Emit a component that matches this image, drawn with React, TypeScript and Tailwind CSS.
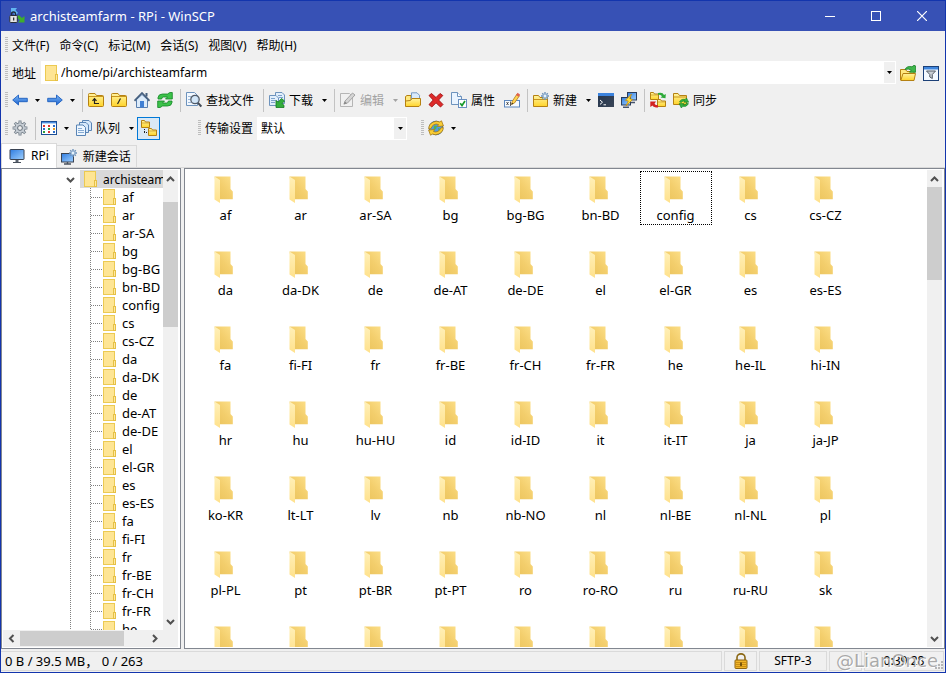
import React from 'react';

type Kids = { children?: React.ReactNode };

/* ---------- icons ---------- */

function Ico({ children }: Kids) {
  return (
    <svg width="16" height="16" viewBox="0 0 16 16" className="shrink-0" aria-hidden="true">
      {children}
    </svg>
  );
}

const smallFolder = 'M0.5 3.5 V13.5 Q0.5 14.5 1.5 14.5 H14.5 Q15.5 14.5 15.5 13.5 V4.5 Q15.5 3.5 14.5 3.5 H8.5 L7 1.5 H1.5 Q0.5 1.5 0.5 2.5 Z';

function Defs() {
  return (
    <svg width="0" height="0" className="absolute" aria-hidden="true">
      <defs>
        <linearGradient id="back" x1="0" y1="1" x2="1" y2="0">
          <stop offset="0" stopColor="#eac35c" />
          <stop offset="0.5" stopColor="#f3ce6c" />
          <stop offset="1" stopColor="#fde08a" />
        </linearGradient>
        <linearGradient id="flap" x1="0" y1="0" x2="0" y2="1">
          <stop offset="0" stopColor="#fff0b8" />
          <stop offset="1" stopColor="#ffe18c" />
        </linearGradient>
        <linearGradient id="gold" x1="0" y1="0" x2="0" y2="1">
          <stop offset="0" stopColor="#fff3a0" />
          <stop offset="1" stopColor="#ffd42a" />
        </linearGradient>
        <linearGradient id="blue" x1="0" y1="0" x2="0" y2="1">
          <stop offset="0" stopColor="#7db8f5" />
          <stop offset="1" stopColor="#1c62cf" />
        </linearGradient>
        <linearGradient id="screen" x1="0" y1="0" x2="1" y2="1">
          <stop offset="0" stopColor="#2f7ce0" />
          <stop offset="1" stopColor="#9fd0ff" />
        </linearGradient>
        <linearGradient id="term" x1="0" y1="0" x2="1" y2="1">
          <stop offset="0" stopColor="#23344d" />
          <stop offset="1" stopColor="#3a4658" />
        </linearGradient>
      </defs>
    </svg>
  );
}

const AppIcon = () => (
  <Ico>
    <path d="M2 0 H8 L6.5 2 L9 5 L6 7.5 L4 4.5 L2 6 Z" fill="#62b5f2" />
    <path d="M15.5 14.5 H9 L10.8 12.6 L7.8 9 L9.8 7 L13 10 L15.5 8 Z" fill="#3fae2a" />
    <path d="M2.5 8 V6 a2 2 0 0 1 4 0 V8" fill="none" stroke="#222b3b" strokeWidth="1.4" />
    <rect x="0.8" y="7.5" width="7.5" height="7" rx="0.8" fill="#e3e3e3" stroke="#2a2f3a" />
    <rect x="4" y="9.5" width="1.3" height="3" fill="#333" />
  </Ico>
);
const ArrowL = () => (
  <Ico>
    <path d="M0.7 8 L6.5 3 V6.3 H15.3 V9.7 H6.5 V13 Z" fill="url(#blue)" stroke="#1d5fc0" strokeWidth="0.9" />
  </Ico>
);
const ArrowR = () => (
  <Ico>
    <path d="M15.3 8 L9.5 3 V6.3 H0.7 V9.7 H9.5 V13 Z" fill="url(#blue)" stroke="#1d5fc0" strokeWidth="0.9" />
  </Ico>
);
const FolderUp = () => (
  <Ico>
    <path d={smallFolder} fill="url(#gold)" stroke="#b58112" />
    <path d="M1 4.5 H15" stroke="#c8951e" />
    <path d="M6.5 7 V11.5 H11 M4.5 8.8 L6.5 6.6 L8.5 8.8" fill="none" stroke="#222" strokeWidth="1.2" />
  </Ico>
);
const FolderRoot = () => (
  <Ico>
    <path d={smallFolder} fill="url(#gold)" stroke="#b58112" />
    <path d="M1 4.5 H15" stroke="#c8951e" />
    <path d="M6.5 12 L9.5 6.5" stroke="#222" strokeWidth="1.2" />
  </Ico>
);
const Home = () => (
  <Ico>
    <path d="M2.5 7.5 L8 2.5 L13.5 7.5 V15.5 H2.5 Z" fill="#dcebfa" stroke="#5a7fae" />
    <path d="M0.5 8.8 L8 1 L15.5 8.8" fill="none" stroke="#47607f" strokeWidth="1.7" />
    <rect x="11.5" y="1" width="2" height="3.5" fill="#47607f" />
    <rect x="6" y="9" width="4" height="6.5" fill="#3f7fd4" />
  </Ico>
);
const Refresh = () => (
  <Ico>
    <path d="M1 7 V5.5 Q1.5 2 5.5 2 H10.5 L12.8 0.5 H15.3 V7 H8.5 L10.5 5 H6.5 Q5 5 4.6 7 Z" fill="#3cc24a" stroke="#118524" strokeWidth="0.8" />
    <path d="M15 9 V10.5 Q14.5 14 10.5 14 H5.5 L3.2 15.5 H0.7 V9 H7.5 L5.5 11 H9.5 Q11 11 11.4 9 Z" fill="#3cc24a" stroke="#118524" strokeWidth="0.8" />
  </Ico>
);
const Find = () => (
  <Ico>
    <path d="M0.5 0.5 H8.5 L11.5 3.5 V13.5 H0.5 Z" fill="#f2f8ff" stroke="#6d93bd" />
    <path d="M2 4.5 H5 M2 7.5 H4 M2 10.5 H5" stroke="#9bb8d8" />
    <circle cx="9" cy="7.5" r="4.2" fill="#cfe4f8" fillOpacity="0.9" stroke="#515b68" strokeWidth="1.3" />
    <path d="M12 10.8 L15.3 14.5" stroke="#434b57" strokeWidth="2" />
  </Ico>
);
const Download = () => (
  <Ico>
    <path d="M6.5 0.5 H13 L15.5 3 V11.5 H6.5 Z" fill="#e2effc" stroke="#6d93bd" />
    <path d="M0.5 3.5 H7 L9.5 6 V13.5 H0.5 Z" fill="#e2effc" stroke="#6d93bd" />
    <path d="M2 6.5 H6 M2 8.5 H7 M2 10.5 H6 M9 3.5 H13 M10 5.5 H14" stroke="#7ea3cc" />
    <path d="M15.5 9 L13 11.5 L15 13.3 L15 15.5 H7 V8.5 L9.3 10 L12.5 6.5 Z" fill="#32ad3c" stroke="#147a20" strokeWidth="0.8" />
  </Ico>
);
const Edit = () => (
  <Ico>
    <path d="M0.5 1.5 H9.5 L12.5 4.5 V14.5 H0.5 Z" fill="#f0f0f0" stroke="#b5b5b5" />
    <path d="M4 12 L5 9 L12.5 1 L15 3 L7.5 11 Z" fill="#d4d4d4" stroke="#a3a3a3" />
    <path d="M3.5 12.5 L5 9.5 L7 11.2 Z" fill="#888" />
  </Ico>
);
const OpenFolder = () => (
  <Ico>
    <path d="M0.5 13 V4.5 L2 3.5 H6 V8" fill="#ffe980" stroke="#b58112" />
    <path d="M6.5 0.8 H12 L14.5 3.3 V9 H6.5 Z" fill="#d9eafb" stroke="#6d93bd" strokeWidth="0.9" />
    <path d="M0.5 14.5 V9 L5.5 8.5 L7 6.5 H15.5 V13 L14 14.5 Z" fill="url(#gold)" stroke="#b58112" />
  </Ico>
);
const Delete = () => (
  <Ico>
    <path d="M1 3.5 L3.5 1.5 L8 5.5 L12 1.5 L14.8 3.5 L10.6 8 L15 12.5 L12.5 15 L8 10.8 L3.8 15 L1 12.6 L5.2 8 Z" fill="#de2a2a" stroke="#a01010" strokeWidth="0.9" />
  </Ico>
);
const Props = () => (
  <Ico>
    <path d="M0.5 0.5 H6.5 L10.5 4.5 V12.5 H0.5 Z" fill="#eaf4ff" stroke="#6d93bd" />
    <path d="M6.5 0.5 V4.5 H10.5" fill="#fff" stroke="#6d93bd" />
    <rect x="7.5" y="7.5" width="8" height="8" fill="#fff" stroke="#6a8fc0" />
    <path d="M9.2 11.2 L11 13.5 L14 9" fill="none" stroke="#189a2a" strokeWidth="1.7" />
  </Ico>
);
const Rename = () => (
  <Ico>
    <rect x="0.5" y="8.5" width="15" height="6.5" fill="#f7fbff" stroke="#5b86bd" />
    <path d="M2.5 10 L4.5 13 M4.5 10 L2.5 13 M6.5 9.5 V14" stroke="#333" strokeWidth="0.8" />
    <path d="M7.5 12.5 L8.3 9.2 L13 2 L15.5 3.7 L10.5 11 Z" fill="#ffd451" stroke="#b07a1b" strokeWidth="0.8" />
    <path d="M12 3.2 L13.5 0.7 L16 2.5 L14.8 4.7 Z" fill="#e2614e" />
    <path d="M7.4 12.7 L8 10.8 L9.2 11.7 Z" fill="#222" />
  </Ico>
);
const Spark = ({ x, y }: { x: number; y: number }) => (
  <g transform={`translate(${x} ${y})`}>
    <path d="M0 -4 V4 M-4 0 H4 M-2.8 -2.8 L2.8 2.8 M2.8 -2.8 L-2.8 2.8" stroke="#6e93bb" strokeWidth="1.4" />
    <circle r="1.9" fill="#e4f1fc" stroke="#86a8cc" strokeWidth="0.8" />
  </g>
);
const NewFolder = () => (
  <Ico>
    <path d="M0.5 3.5 V14.5 H14.5 V5.5 H7 L5.5 3.5 Z" fill="url(#gold)" stroke="#b58112" />
    <path d="M1 7.5 H14" stroke="#c8951e" />
    <Spark x={12} y={4} />
  </Ico>
);
const Terminal = () => (
  <Ico>
    <rect x="0" y="1" width="16" height="14" fill="url(#term)" />
    <rect x="0" y="1" width="16" height="3" fill="#3b82dd" />
    <path d="M2 8 L4.5 10.2 L2 12.4 M5.5 12.8 H8" fill="none" stroke="#fff" />
  </Ico>
);
const Putty = () => (
  <Ico>
    <rect x="6.5" y="0.5" width="9" height="7.5" fill="url(#screen)" stroke="#2b3d5a" />
    <rect x="0.5" y="5.5" width="9" height="7.5" fill="url(#screen)" stroke="#2b3d5a" />
    <path d="M2 15.2 H8 M10 10.5 H14" stroke="#46536a" strokeWidth="1.4" />
    <path d="M10.5 2 L4.5 8.3 L7.3 9 L5 14 L11.5 7.5 L8.8 6.8 Z" fill="#ffe23c" stroke="#c58b0d" strokeWidth="0.8" />
  </Ico>
);
const MiniFolder = ({ x, y }: { x: number; y: number }) => (
  <g transform={`translate(${x} ${y})`}>
    <path d="M0.5 0.5 H3.5 L4.5 2 H8.5 V7.5 H0.5 Z" fill="url(#gold)" stroke="#b58112" />
    <path d="M1 3 H8" stroke="#c8951e" strokeWidth="0.7" />
  </g>
);
const Compare = () => (
  <Ico>
    <MiniFolder x={0} y={0} />
    <MiniFolder x={7} y={7} />
    <path d="M8 1 Q13 0 14 3 L15.8 2 L15.5 6.3 L10.5 5.5 L12 4.2 Q11 2.3 8 2.8 Z" fill="#2faa3a" />
    <path d="M8 15.5 Q3.5 15.5 2.5 13.5 L0.3 15 V9.5 H6 L4.5 11.7 Q5.5 13.3 8 13.3 Z" fill="#d22222" />
  </Ico>
);
const Sync = () => (
  <Ico>
    <path d="M0.5 1.5 H5 L6.5 3.5 H13.5 V12.5 H0.5 Z" fill="url(#gold)" stroke="#b58112" />
    <path d="M1 5 H13" stroke="#c8951e" />
    <path d="M6.5 10 Q8 6.5 12 7.5 L13.5 6 L15.7 10.2 H11 L12 9 Q9.5 8.5 8.3 10.5 Z" fill="#34b042" stroke="#13801f" strokeWidth="0.6" />
    <path d="M15.5 11.7 Q13.5 15.5 9.8 14.3 L8.3 16 L6.2 11.6 H11 L10 12.8 Q12 13.3 13.7 11.3 Z" fill="#34b042" stroke="#13801f" strokeWidth="0.6" />
  </Ico>
);
const Gear = () => (
  <Ico>
    <g stroke="#7b858f" strokeWidth="3">
      <path d="M8 0.6 V15.4 M0.6 8 H15.4 M2.8 2.8 L13.2 13.2 M13.2 2.8 L2.8 13.2" />
    </g>
    <circle cx="8" cy="8" r="5.2" fill="#c5ccd3" stroke="#7b858f" />
    <g stroke="#c5ccd3" strokeWidth="1.3">
      <path d="M8 1.3 V14.7 M1.3 8 H14.7 M3.3 3.3 L12.7 12.7 M12.7 3.3 L3.3 12.7" />
    </g>
    <circle cx="8" cy="8" r="2.4" fill="#f0f0f0" stroke="#66707a" />
  </Ico>
);
const ListView = () => (
  <Ico>
    <rect x="0.5" y="1.5" width="15" height="13" fill="#fff" stroke="#1c4f96" />
    <rect x="1" y="2" width="14" height="1.4" fill="#4d90e0" />
    <path d="M2 6 H4 M7 6 H9 M7 12 H9" stroke="#dd3333" strokeWidth="2" />
    <path d="M12 6 H14 M2 9 H4 M12 12 H14" stroke="#2a6cc8" strokeWidth="2" />
    <path d="M7 9 H9 M2 12 H4" stroke="#2f9e3a" strokeWidth="2" />
    <path d="M12 9 H14" stroke="#e8a020" strokeWidth="2" />
  </Ico>
);
const Queue = () => (
  <Ico>
    <path d="M6.5 0.5 H13 L15.5 3 V10.5 H6.5 Z" fill="#d6e8fa" stroke="#5984b5" />
    <path d="M3.5 2.5 H10 L12.5 5 V12.5 H3.5 Z" fill="#d6e8fa" stroke="#5984b5" />
    <path d="M0.5 5 H7 L9.5 7.5 V15.5 H0.5 Z" fill="#edf6ff" stroke="#5984b5" />
    <path d="M2 8.5 H6 M2 10.5 H8 M2 12.5 H8" stroke="#86abd3" />
  </Ico>
);
const TreeToggle = () => (
  <Ico>
    <MiniFolder x={0} y={0} />
    <MiniFolder x={7} y={8} />
    <path d="M3.5 9 V12.5 M3 12.5 H7" stroke="#222" strokeDasharray="1 1" />
  </Ico>
);
const Monitor = () => (
  <Ico>
    <rect x="1" y="1.5" width="14" height="10" rx="0.5" fill="url(#screen)" stroke="#3a4352" />
    <path d="M6.5 12 H9.5 V14 H6.5 Z" fill="#58616e" />
    <path d="M4 14.5 H12" stroke="#48505c" />
  </Ico>
);
const NewSession = () => (
  <Ico>
    <rect x="0.5" y="4.5" width="12" height="8.5" fill="url(#screen)" stroke="#3a4352" />
    <path d="M3 15 H10 M6.5 13 V15" stroke="#48505c" strokeWidth="1.4" />
    <Spark x={12} y={4} />
  </Ico>
);
const Globe = () => (
  <Ico>
    <circle cx="8" cy="8" r="6.8" fill="#4e9be6" stroke="#2a69b0" />
    <path d="M6 5.5 L9 6 L8 9 L5.5 10 Z M10 8 L12.5 9 L10.5 11 Z" fill="#58b24b" />
    <path d="M0.8 9 Q0.5 4 5.5 2 Q9 0.5 11.5 2 L13.5 0.8 L15.5 6 L9.5 6.5 L10.5 4.5 Q8 3.3 5.8 4.8 Q3.5 6.3 3 8.6 Z" fill="#f9cd35" stroke="#a77a14" strokeWidth="0.8" />
    <path d="M15.2 7.5 Q15.5 12 10.5 14 Q7 15.5 4.6 14 L2.5 15.2 L0.6 10 L6.5 9.5 L5.5 11.5 Q8 12.7 10.2 11.2 Q12.5 9.7 13 7.8 Z" fill="#f9cd35" stroke="#a77a14" strokeWidth="0.8" />
  </Ico>
);
const OpenDir = () => (
  <Ico>
    <path d="M0.5 15 V4.5 H5.5 L7 6.5 H14 V9" fill="#ffe980" stroke="#b58112" />
    <path d="M0.8 15.5 L3 8.5 H15.5 L14 15.5 Z" fill="url(#gold)" stroke="#b58112" />
    <path d="M5 4.5 Q7 0.5 12 1.8 L14 0.3 L15.7 1 V7.2 H9.5 L11.3 5 Q8.5 3.4 5 4.5 Z" fill="#3eb64b" stroke="#177f25" strokeWidth="0.8" />
  </Ico>
);
const Filter = () => (
  <Ico>
    <rect x="0.5" y="1.5" width="15" height="14" fill="#f4f9ff" stroke="#1c4077" />
    <rect x="1" y="2" width="14" height="2.5" fill="#3f86dd" />
    <path d="M3.5 6 H12.5 L9.3 9.5 V13.5 L6.8 12 V9.5 Z" fill="#c9ced4" stroke="#565d66" />
  </Ico>
);
const Lock = () => (
  <Ico>
    <path d="M4 8 V4.5 a4 3.6 0 0 1 8 0 V8" fill="none" stroke="#8a6714" strokeWidth="1.6" />
    <rect x="2" y="7" width="12" height="8.5" rx="0.8" fill="#f0b52a" stroke="#8f6510" />
    <path d="M3 9.5 H13 M3 11.5 H13 M3 13.5 H13" stroke="#c98d14" />
    <path d="M8 9.5 V13" stroke="#5e4208" strokeWidth="1.6" />
  </Ico>
);

function FolderSmall() {
  return (
    <svg width="14" height="16" viewBox="0 0 14 16" className="shrink-0" aria-hidden="true">
      <rect x="0.5" y="0.5" width="11" height="15" fill="#fee594" stroke="#ecca52" />
      <rect x="10.5" y="9.5" width="2" height="6" fill="#ffe9a0" stroke="#e6c045" />
    </svg>
  );
}

function FolderLarge() {
  return (
    <svg width="20" height="28" viewBox="0 0 20 28" className="shrink-0" aria-hidden="true">
      <path d="M0.5 0.5 H16.5 V13 L18.8 15.5 V23.3 H4 Z" fill="url(#back)" />
      <path d="M0.5 0.5 L6 4 V27 L0.5 23.5 Z" fill="url(#flap)" />
    </svg>
  );
}

function Chevron({ dir }: { dir: 'up' | 'down' | 'left' | 'right' }) {
  const d = {
    up: 'M1 7 L4.5 3.5 L8 7',
    down: 'M1 3 L4.5 6.5 L8 3',
    left: 'M6.5 1 L3 4.5 L6.5 8',
    right: 'M3 1 L6.5 4.5 L3 8',
  }[dir];
  return (
    <svg width="9" height="9" viewBox="0 0 9 9" aria-hidden="true">
      <path d={d} fill="none" stroke="#505050" strokeWidth="2" />
    </svg>
  );
}

const Tri = () => (
  <svg width="5" height="3" viewBox="0 0 5 3" aria-hidden="true">
    <path d="M0 0 H5 L2.5 3 Z" fill="currentColor" />
  </svg>
);

/* ---------- toolbar parts ---------- */

const Grip = () => (
  <span className="h-4 w-[3px] shrink-0 bg-[repeating-linear-gradient(to_bottom,#bdbdbd_0_1px,transparent_1px_2px)]" />
);
const Sep = () => <span className="ml-1 mr-px h-[23px] w-px shrink-0 bg-[#c3c3c3]" />;

function Tool({ icon, label, text, disabled }: { icon: React.ReactNode; label: string; text?: boolean; disabled?: boolean }) {
  return (
    <button
      type="button"
      aria-label={label}
      disabled={disabled}
      className={`flex h-[23px] shrink-0 items-center gap-1 pl-1 disabled:text-[#a3a3a3] ${text ? 'pr-[5px]' : 'pr-[3px]'}`}
    >
      {icon}
      {text && <span className="pt-[2px]">{label}</span>}
    </button>
  );
}

function Caret({ label, disabled }: { label: string; disabled?: boolean }) {
  return (
    <button type="button" aria-label={label} disabled={disabled} className="flex h-[23px] w-3 shrink-0 items-center justify-center disabled:text-[#a3a3a3]">
      <Tri />
    </button>
  );
}

/* ---------- data ---------- */

const menus = ['文件(F)', '命令(C)', '标记(M)', '会话(S)', '视图(V)', '帮助(H)'];

const folders =
  'af ar ar-SA bg bg-BG bn-BD config cs cs-CZ da da-DK de de-AT de-DE el el-GR es es-ES fa fi-FI fr fr-BE fr-CH fr-FR he he-IL hi-IN hr hu hu-HU id id-ID it it-IT ja ja-JP ko-KR lt-LT lv nb nb-NO nl nl-BE nl-NL pl pl-PL pt pt-BR pt-PT ro ro-RO ru ru-RU sk'.split(
    ' ',
  );
const treeFolders = folders.slice(0, 25);
const partialRow = Array.from({ length: 9 }, (_, i) => i);

/* ---------- sections ---------- */

function TitleBar() {
  return (
    <header className="flex h-[30px] shrink-0 items-center bg-[#3751b5] pl-2 text-white">
      <AppIcon />
      <h1 className="ml-[5px] flex-1 text-[13px] leading-4">archisteamfarm - RPi - WinSCP</h1>
      <button type="button" aria-label="最小化" className="flex h-full w-[46px] items-center justify-center">
        <svg width="10" height="10"><path d="M0 5.5 H10" stroke="#fff" /></svg>
      </button>
      <button type="button" aria-label="最大化" className="flex h-full w-[46px] items-center justify-center">
        <svg width="10" height="10"><rect x="0.5" y="0.5" width="9" height="9" fill="none" stroke="#fff" /></svg>
      </button>
      <button type="button" aria-label="关闭" className="flex h-full w-[46px] items-center justify-center">
        <svg width="10" height="10"><path d="M0 0 L10 10 M10 0 L0 10" stroke="#fff" strokeWidth="1.2" /></svg>
      </button>
    </header>
  );
}

function AddressBar() {
  return (
    <div className="flex h-[27px] shrink-0 items-center pl-1">
      <Grip />
      <label htmlFor="address" className="ml-1 mr-[5px] pt-[2px]">地址</label>
      <div className="flex h-[23px] min-w-0 flex-1 items-center bg-white pl-1">
        <FolderSmall />
        <input id="address" defaultValue="/home/pi/archisteamfarm" className="ml-[2px] h-full min-w-0 flex-1 bg-transparent outline-none" />
        <button type="button" aria-label="地址列表" className="mr-px flex h-[21px] w-[11px] items-center justify-center bg-[#f0f0f0]">
          <Tri />
        </button>
      </div>
      <div className="flex pr-[3px]">
        <Tool icon={<OpenDir />} label="打开目录" />
        <Tool icon={<Filter />} label="过滤" />
      </div>
    </div>
  );
}

function Toolbars() {
  return (
    <>
      <div className="flex h-7 shrink-0 items-center pl-1">
        <Grip />
        <Tool icon={<ArrowL />} label="后退" />
        <Caret label="后退历史" />
        <Tool icon={<ArrowR />} label="前进" />
        <Caret label="前进历史" />
        <Sep />
        <Tool icon={<FolderUp />} label="上级目录" />
        <Tool icon={<FolderRoot />} label="根目录" />
        <Tool icon={<Home />} label="主目录" />
        <Tool icon={<Refresh />} label="刷新" />
        <Sep />
        <Tool icon={<Find />} label="查找文件" text />
        <Sep />
        <Tool icon={<Download />} label="下载" text />
        <Caret label="下载选项" />
        <Sep />
        <Tool icon={<Edit />} label="编辑" text disabled />
        <Caret label="编辑选项" disabled />
        <Tool icon={<OpenFolder />} label="打开" />
        <Tool icon={<Delete />} label="删除" />
        <Tool icon={<Props />} label="属性" text />
        <Tool icon={<Rename />} label="重命名" />
        <Sep />
        <Tool icon={<NewFolder />} label="新建" text />
        <Caret label="新建选项" />
        <Tool icon={<Terminal />} label="终端" />
        <Tool icon={<Putty />} label="PuTTY" />
        <Sep />
        <Tool icon={<Compare />} label="同步浏览" />
        <Tool icon={<Sync />} label="同步" text />
      </div>
      <div className="flex h-7 shrink-0 items-center pl-1">
        <Grip />
        <Tool icon={<Gear />} label="选项" />
        <Sep />
        <Tool icon={<ListView />} label="视图" />
        <Caret label="视图选项" />
        <Tool icon={<Queue />} label="队列" text />
        <Caret label="队列选项" />
        <button type="button" aria-label="目录树" aria-pressed="true" className="flex size-[23px] items-center justify-center border border-[#0078d7] bg-[#d9e8f5]">
          <TreeToggle />
        </button>
        <div className="ml-[38px] flex items-center">
          <Grip />
          <label htmlFor="preset" className="mx-1 pt-[2px]">传输设置</label>
          <div className="relative h-[23px] w-[150px]">
            <select id="preset" className="size-full appearance-none bg-white pt-[2px] pl-1 outline-none">
              <option>默认</option>
            </select>
            <span className="pointer-events-none absolute inset-y-px right-px flex w-3 items-center justify-center bg-[#f0f0f0]">
              <Tri />
            </span>
          </div>
        </div>
        <div className="ml-[14px] flex items-center">
          <Grip />
          <Tool icon={<Globe />} label="浏览" />
          <Caret label="浏览选项" />
        </div>
      </div>
    </>
  );
}

function Tabs() {
  return (
    <nav className="flex h-[26px] shrink-0 items-end border-b border-[#d9d9d9]">
      <button type="button" className="-mb-px flex h-[25px] items-center gap-[6px] border border-b-0 border-[#d9d9d9] bg-white px-[7px]">
        <Monitor />
        <span>RPi</span>
      </button>
      <button type="button" className="flex h-[22px] items-center gap-[6px] border border-b-0 border-l-0 border-[#d9d9d9] pl-1 pr-[5px]">
        <NewSession />
        <span>新建会话</span>
      </button>
    </nav>
  );
}

const dots = 'bg-[repeating-linear-gradient(to_bottom,#808080_0_1px,transparent_1px_2px)]';
const hdots = 'bg-[repeating-linear-gradient(to_right,#808080_0_1px,transparent_1px_2px)]';

function TreePanel() {
  return (
    <aside className="flex w-[180px] shrink-0 flex-col border border-[#828790] bg-white p-px pr-[2px]">
      <div className="flex min-h-0 flex-1">
        <div className="flex min-w-0 flex-1 overflow-hidden">
          <div className="flex w-[77px] shrink-0 flex-col items-end">
            <div className="flex h-[18px] shrink-0 items-center pr-[5px]">
              <Chevron dir="down" />
            </div>
            <span className={`mr-[9px] w-px flex-1 ${dots}`} />
          </div>
          <div className="min-w-0 flex-1 overflow-hidden">
            <div className="flex h-[18px] items-center bg-[#d9d9d9] pl-1">
              <FolderSmall />
              <span className="ml-[5px] pt-[2px]">archisteamfarm</span>
            </div>
            <ul className="flex">
              <li className={`ml-[10px] w-px shrink-0 ${dots}`} aria-hidden="true" />
              <li>
                <ul>
                  {treeFolders.map((name) => (
                    <li key={name} className="flex h-[18px] items-center text-[13px] whitespace-nowrap">
                      <span className={`h-px w-[11px] shrink-0 ${hdots}`} />
                      <span className="ml-px flex"><FolderSmall /></span>
                      <span className="ml-[5px] pt-[2px]">{name}</span>
                    </li>
                  ))}
                </ul>
              </li>
            </ul>
          </div>
        </div>
        <div className="flex w-[15px] shrink-0 flex-col items-center bg-[#f0f0f0]">
          <span className="flex h-8 shrink-0 items-start pt-1"><Chevron dir="up" /></span>
          <span className="h-[125px] w-full shrink-0 bg-[#cdcdcd]" />
          <span className="flex-1" />
          <span className="flex h-[17px] items-center"><Chevron dir="down" /></span>
        </div>
      </div>
      <div className="flex h-[17px] shrink-0 items-center bg-[#f0f0f0] pr-[15px]">
        <span className="flex w-[17px] shrink-0 justify-center"><Chevron dir="left" /></span>
        <span className="h-[15px] w-[104px] bg-[#cdcdcd]" />
        <span className="flex-1" />
        <span className="flex w-[17px] justify-center"><Chevron dir="right" /></span>
      </div>
    </aside>
  );
}

function FilePanel() {
  return (
    <main className="flex min-w-0 flex-1 border border-[#828790] bg-white p-px pr-[2px]">
      <ul className="grid min-w-0 flex-1 auto-rows-[75px] grid-cols-[repeat(auto-fill,75px)] content-start overflow-hidden pt-px pl-[2px]">
        {folders.map((name) => (
          <li key={name} className="flex justify-center">
            <button
              type="button"
              className={`flex h-[54px] w-[72px] flex-col items-center border border-dotted pt-1 ${name === 'config' ? 'border-black' : 'border-transparent'}`}
            >
              <span className="mr-1 flex"><FolderLarge /></span>
              <span className="mt-[3px] text-[13px] leading-4">{name}</span>
            </button>
          </li>
        ))}
        {partialRow.map((i) => (
          <li key={i} className="flex justify-center pt-[5px] pr-1">
            <FolderLarge />
          </li>
        ))}
      </ul>
      <div className="flex w-[15px] shrink-0 flex-col items-center bg-[#f0f0f0]">
        <span className="flex h-[17px] shrink-0 items-center"><Chevron dir="up" /></span>
        <span className="h-[93px] w-full shrink-0 bg-[#cdcdcd]" />
        <span className="flex-1" />
        <span className="flex h-[17px] items-center"><Chevron dir="down" /></span>
      </div>
    </main>
  );
}

function StatusBar() {
  const cell = 'flex h-5 items-center border border-[#dadada]';
  return (
    <footer className="flex h-[23px] shrink-0 items-center gap-[2px] pr-px text-[13px] leading-4">
      <div className={`${cell} flex-1 border-l-0 pl-1 whitespace-pre`}>0 B / 39.5 MB， 0 / 263</div>
      <div className={`${cell} w-[33px] justify-center`}><Lock /></div>
      <div className={`${cell} w-[68px] justify-center text-xs`}>SFTP-3</div>
      <div className={`${cell} w-[33px]`} />
      <div className={`${cell} relative w-20 justify-center text-xs`}>
        0:39:28
        <span className="pointer-events-none absolute right-[5px] -bottom-px font-['DejaVu_Sans',sans-serif] text-lg leading-5 whitespace-nowrap text-[#888]/70 [text-shadow:1px_1px_0_#fff]">
          @LianOnce
        </span>
        <svg width="9" height="9" viewBox="0 0 9 9" className="absolute right-0 bottom-0" aria-hidden="true">
          <path d="M7 1h2M4 4h2M7 4h2M1 7h2M4 7h2M7 7h2" stroke="#b5b5b5" strokeWidth="2" />
        </svg>
      </div>
    </footer>
  );
}

export default function App() {
  return (
    <div className="flex h-screen flex-col overflow-hidden border border-[#1335ad] bg-[#f0f0f0] font-['Noto_Sans','Noto_Sans_CJK_SC',sans-serif] text-xs text-black">
      <Defs />
      <TitleBar />
      <nav className="flex h-7 shrink-0 items-center pl-1">
        <Grip />
        {menus.map((m) => (
          <button key={m} type="button" className="pt-[2px] pr-[6px] pl-1">{m}</button>
        ))}
      </nav>
      <AddressBar />
      <Toolbars />
      <Tabs />
      <div className="flex min-h-0 flex-1 gap-[3px]">
        <TreePanel />
        <FilePanel />
      </div>
      <StatusBar />
    </div>
  );
}
